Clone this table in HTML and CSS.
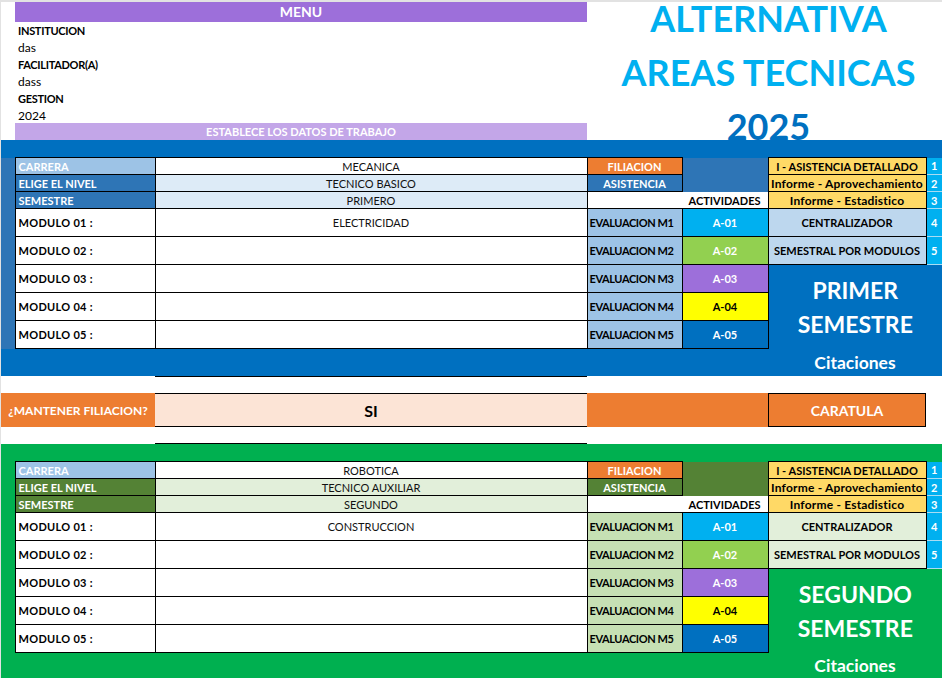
FILE: index.html
```html
<!DOCTYPE html>
<html lang="es">
<head>
<meta charset="utf-8">
<title>Alternativa Areas Tecnicas 2025</title>
<link rel="stylesheet" href="styles.css">
</head>
<body>
<div class="sheet">
  <header class="top">
    <div class="menu">
      <div class="menu-bar">MENU</div>
      <div class="f-label">INSTITUCION</div>
      <div class="f-value">das</div>
      <div class="f-label">FACILITADOR(A)</div>
      <div class="f-value">dass</div>
      <div class="f-label">GESTION</div>
      <div class="f-value">2024</div>
      <div class="menu-foot">ESTABLECE LOS DATOS DE TRABAJO</div>
    </div>
    <div class="title">
      <div class="t-line">ALTERNATIVA</div>
      <div class="t-line">AREAS TECNICAS</div>
      <div class="t-line t-year">2025</div>
    </div>
  </header>

  <section class="sem blue">
    <table class="grid">
      <colgroup><col class="ca"><col class="cb"><col class="cc"><col class="cd"><col class="ce"><col class="cf"><col class="cg"></colgroup>
      <tr class="r17">
        <td class="strip"></td>
        <td class="lbl light">CARRERA</td>
        <td class="val">MECANICA</td>
        <td class="hdr orange">FILIACION</td>
        <td class="merged" rowspan="2"></td>
        <td class="rep yellow">I - ASISTENCIA DETALLADO</td>
        <td class="num">1</td>
      </tr>
      <tr class="r17">
        <td class="strip"></td>
        <td class="lbl dark">ELIGE EL NIVEL</td>
        <td class="val tint">TECNICO BASICO</td>
        <td class="hdr dark">ASISTENCIA</td>
        <td class="rep yellow mixed">Informe - Aprovechamiento</td>
        <td class="num">2</td>
      </tr>
      <tr class="r17">
        <td class="strip"></td>
        <td class="lbl dark">SEMESTRE</td>
        <td class="val tint">PRIMERO</td>
        <td class="act" colspan="2">ACTIVIDADES</td>
        <td class="rep yellow mixed">Informe - Estadistico</td>
        <td class="num">3</td>
      </tr>
      <tr class="r28">
        <td class="strip"></td>
        <td class="mod">MODULO 01 :</td>
        <td class="val">ELECTRICIDAD</td>
        <td class="ev">EVALUACION M1</td>
        <td class="a a1">A-01</td>
        <td class="rep soft">CENTRALIZADOR</td>
        <td class="num">4</td>
      </tr>
      <tr class="r28">
        <td class="strip"></td>
        <td class="mod">MODULO 02 :</td>
        <td class="val"></td>
        <td class="ev">EVALUACION M2</td>
        <td class="a a2">A-02</td>
        <td class="rep soft">SEMESTRAL POR MODULOS</td>
        <td class="num">5</td>
      </tr>
      <tr class="r28">
        <td class="strip"></td>
        <td class="mod">MODULO 03 :</td>
        <td class="val"></td>
        <td class="ev">EVALUACION M3</td>
        <td class="a a3">A-03</td>
        <td class="big" colspan="2" rowspan="3">PRIMER<br>SEMESTRE</td>
      </tr>
      <tr class="r28">
        <td class="strip"></td>
        <td class="mod">MODULO 04 :</td>
        <td class="val"></td>
        <td class="ev">EVALUACION M4</td>
        <td class="a a4">A-04</td>
      </tr>
      <tr class="r28">
        <td class="strip"></td>
        <td class="mod">MODULO 05 :</td>
        <td class="val"></td>
        <td class="ev">EVALUACION M5</td>
        <td class="a a5">A-05</td>
      </tr>
      <tr class="r28">
        <td class="foot" colspan="5"></td>
        <td class="cit" colspan="2">Citaciones</td>
      </tr>
    </table>
  </section>

  <section class="mid">
    <div class="m-top"></div>
    <div class="keep">¿MANTENER FILIACION?</div>
    <div class="si">SI</div>
    <div class="fill"></div>
    <div class="caratula">CARATULA</div>
    <div class="m-bot"></div>
  </section>

  <section class="sem green">
    <table class="grid">
      <colgroup><col class="ca"><col class="cb"><col class="cc"><col class="cd"><col class="ce"><col class="cf"><col class="cg"></colgroup>
      <tr class="r17">
        <td class="strip"></td>
        <td class="lbl light">CARRERA</td>
        <td class="val">ROBOTICA</td>
        <td class="hdr orange">FILIACION</td>
        <td class="merged" rowspan="2"></td>
        <td class="rep yellow">I - ASISTENCIA DETALLADO</td>
        <td class="num">1</td>
      </tr>
      <tr class="r17">
        <td class="strip"></td>
        <td class="lbl dark">ELIGE EL NIVEL</td>
        <td class="val tint">TECNICO AUXILIAR</td>
        <td class="hdr dark">ASISTENCIA</td>
        <td class="rep yellow mixed">Informe - Aprovechamiento</td>
        <td class="num">2</td>
      </tr>
      <tr class="r17">
        <td class="strip"></td>
        <td class="lbl dark">SEMESTRE</td>
        <td class="val tint">SEGUNDO</td>
        <td class="act" colspan="2">ACTIVIDADES</td>
        <td class="rep yellow mixed">Informe - Estadistico</td>
        <td class="num">3</td>
      </tr>
      <tr class="r28">
        <td class="strip"></td>
        <td class="mod">MODULO 01 :</td>
        <td class="val">CONSTRUCCION</td>
        <td class="ev">EVALUACION M1</td>
        <td class="a a1">A-01</td>
        <td class="rep soft">CENTRALIZADOR</td>
        <td class="num">4</td>
      </tr>
      <tr class="r28">
        <td class="strip"></td>
        <td class="mod">MODULO 02 :</td>
        <td class="val"></td>
        <td class="ev">EVALUACION M2</td>
        <td class="a a2">A-02</td>
        <td class="rep soft">SEMESTRAL POR MODULOS</td>
        <td class="num">5</td>
      </tr>
      <tr class="r28">
        <td class="strip"></td>
        <td class="mod">MODULO 03 :</td>
        <td class="val"></td>
        <td class="ev">EVALUACION M3</td>
        <td class="a a3">A-03</td>
        <td class="big" colspan="2" rowspan="3">SEGUNDO<br>SEMESTRE</td>
      </tr>
      <tr class="r28">
        <td class="strip"></td>
        <td class="mod">MODULO 04 :</td>
        <td class="val"></td>
        <td class="ev">EVALUACION M4</td>
        <td class="a a4">A-04</td>
      </tr>
      <tr class="r28">
        <td class="strip"></td>
        <td class="mod">MODULO 05 :</td>
        <td class="val"></td>
        <td class="ev">EVALUACION M5</td>
        <td class="a a5">A-05</td>
      </tr>
      <tr class="r26">
        <td class="foot" colspan="5"></td>
        <td class="cit" colspan="2">Citaciones</td>
      </tr>
    </table>
  </section>
</div>
</body>
</html>
```

FILE: styles.css
```css
* { box-sizing: border-box; }
html, body { margin: 0; padding: 0; background: #fff; }
body { font-family: Lato, "Open Sans", sans-serif; color: #000; }

.sheet {
  width: 942px;
  border-top: 2px solid #e2e2e2;
  border-left: 1px solid #e2e2e2;
}

/* ---------- top ---------- */
.top {
  display: grid;
  grid-template-columns: 14px 572px 355px;
  height: 138px;
}
.menu {
  grid-column: 2;
  display: grid;
  grid-template-rows: 20px 17px 17px 17px 17px 17px 16px 17px;
}
.menu-bar {
  background: #9d6fda;
  color: #fff;
  font-weight: 700;
  font-size: 14px;
  text-align: center;
  line-height: 20px;
}
.f-label, .f-value {
  padding-left: 3px;
  display: flex;
  align-items: center;
}
.f-label { font-weight: 700; font-size: 11px; letter-spacing: -0.3px; }
.f-value { font-size: 12px; }
.menu-foot {
  background: #c3a6e8;
  color: #fff;
  font-weight: 700;
  font-size: 11px;
  text-align: center;
  line-height: 17px;
}
.title {
  grid-column: 3;
  margin-top: -11px;
  padding-left: 8px;
  text-align: center;
  font-weight: 700;
  font-size: 36px;
  line-height: 54px;
  color: #00b0f0;
  position: relative;
  z-index: 1;
}
.t-year { color: #0070c0; }

/* ---------- semester tables ---------- */
.sem { padding-top: 17px; overflow: hidden; }
.sem.blue { background: #0070c0; height: 236px; }
.sem.green { background: #00b050; height: 234px; }

.grid {
  width: 941px;
  table-layout: fixed;
  border-collapse: collapse;
  border-spacing: 0;
}
.ca { width: 14px; }
.cb { width: 140px; }
.cc { width: 432px; }
.cd { width: 95px; }
.ce { width: 86px; }
.cf { width: 158px; }
.cg { width: 16px; }

.grid td {
  padding: 0;
  font-size: 11px;
  font-weight: 700;
  white-space: nowrap;
  overflow: hidden;
  vertical-align: middle;
}
.r17 { height: 17px; }
.r26 { height: 26px; }
.r28 { height: 28px; }

.blue .strip { background: #2e75b6; }

.grid .lbl, .grid .mod, .grid .val, .grid .hdr, .grid .ev, .grid .a, .grid .rep { border: 1px solid #000; }

.grid .lbl { color: #fff; padding-left: 3px; }
.lbl.light { background: #9dc3e6; }
.blue .lbl.dark, .blue .hdr.dark, .blue .merged { background: #2e75b6; }
.green .lbl.dark, .green .hdr.dark, .green .merged { background: #548235; }

.grid .val {
  background: #fff;
  text-align: center;
  font-weight: 400;
  color: #111;
}
.blue .val.tint { background: #ddebf7; }
.green .val.tint { background: #e2efda; }

.hdr { color: #fff; text-align: center; }
.hdr.orange { background: #ed7d31; }

.grid .act {
  background: #fff;
  text-align: right;
  padding-right: 7px;
}

.grid .mod { background: #fff; padding-left: 3px; letter-spacing: 0.3px; }

.grid .ev { padding-left: 2px; letter-spacing: -0.4px; }
.blue .ev { background: #9dc3e6; }
.green .ev { background: #c6e0b4; }

.a { text-align: center; color: #fff; }
.a1 { background: #00b0f0; }
.a2 { background: #92d050; }
.a3 { background: #9d6fda; }
.a4 { background: #ffff00; color: #000; }
.a5 { background: #0070c0; }

.rep { text-align: center; }
.rep.yellow { background: #ffd966; }
.grid .rep.mixed { font-size: 12px; letter-spacing: 0.2px; }
.blue .rep.soft { background: #bdd7ee; }
.green .rep.soft { background: #e2efda; }

.num {
  background: #00b0f0;
  color: #fff;
  text-align: center;
  border-bottom: 1px solid #a9dcf3;
}

.grid .big {
  color: #fff;
  text-align: center;
  font-size: 23px;
  line-height: 34px;
}
.grid .cit {
  color: #fff;
  text-align: center;
  font-size: 17.5px;
}

/* ---------- middle ---------- */
.mid {
  display: grid;
  grid-template-columns: 154px 432px 181px 158px 16px;
  grid-template-rows: 17px 34px 17px;
  height: 68px;
  background: #fff;
}
.m-top { grid-column: 2; grid-row: 1; border-top: 1px solid #000; }
.m-bot { grid-column: 2; grid-row: 3; border-bottom: 1px solid #000; }
.keep {
  grid-column: 1; grid-row: 2;
  background: #ed7d31;
  color: #fff;
  font-weight: 700;
  font-size: 12px;
  display: flex; align-items: center; justify-content: center;
}
.si {
  grid-column: 2; grid-row: 2;
  background: #fce4d6;
  border-top: 1px solid #000;
  border-bottom: 1px solid #000;
  font-weight: 700;
  font-size: 16px;
  display: flex; align-items: center; justify-content: center;
}
.fill { grid-column: 3; grid-row: 2; background: #ed7d31; }
.caratula {
  grid-column: 4; grid-row: 2;
  background: #ed7d31;
  border: 1px solid #000;
  color: #fff;
  font-weight: 700;
  font-size: 14px;
  display: flex; align-items: center; justify-content: center;
}
```
